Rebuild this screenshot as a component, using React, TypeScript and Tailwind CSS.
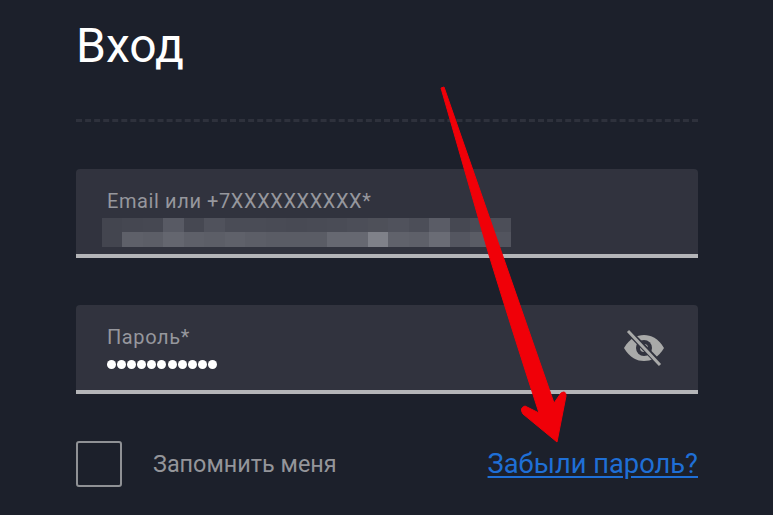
const mosaicTop = ["#43454f", "#454751", "#464852", "#585a64", "#464852", "#50525c", "#4a4c56", "#4a4c56", "#494b55", "#484a54", "#494b55", "#4a4c56", "#4c4e58", "#4e5059", "#50525c", "#4c4e58", "#5a5c66", "#464852", "#4a4c56", "#4c4e58"];
const mosaicBottom = ["#43454f", "#5e6069", "#5c5e67", "#64666f", "#5e6069", "#5c5e67", "#5f616a", "#5c5e67", "#5a5c65", "#5a5c65", "#5a5c65", "#666871", "#666871", "#7f8189", "#60626b", "#5e6069", "#6a6c75", "#545660", "#5a5c65", "#52545e"];

function Mosaic() {
  return (
    <div className="mt-[6px] ml-[-5px] grid w-[409px] grid-cols-[repeat(20,minmax(0,1fr))]">
      {mosaicTop.map((color, i) => (
        <div key={"t" + i} className="h-[14px]" style={{ backgroundColor: color }} />
      ))}
      {mosaicBottom.map((color, i) => (
        <div key={"b" + i} className="h-[15px]" style={{ backgroundColor: color }} />
      ))}
    </div>
  );
}

function Field({ label, children }: { label: string; children: React.ReactNode }) {
  return (
    <div className="relative h-[89px] rounded-t-[4px] border-b-[4px] border-[#b4b5b8] bg-[#31333e] pl-[31px] pt-[21px]">
      <p className="text-[20px] leading-[22px] tracking-[0.6px] text-[#96979d]">{label}</p>
      {children}
    </div>
  );
}

function Arrow() {
  return (
    <svg className="absolute left-0 top-0" width="773" height="515" viewBox="0 0 773 515">
      <path
        d="M441 88 L444 87 L554 403 L561 393 Q566 390 566 396 L557 442 L523 414 Q519 408 525 406 L539 413 Q512 330 489 255 Z"
        fill="#f00008"
        stroke="#f00008"
        strokeWidth="1"
        strokeLinejoin="round"
      />
    </svg>
  );
}

export default function App() {
  return (
    <div className="relative h-[515px] w-[773px] overflow-hidden bg-[#1c202b] font-['Roboto',sans-serif]">
      <div className="w-[622px] translate-x-[76px]">
        <h1 className="pt-[18px] text-[48px] leading-[56px] text-white">Вход</h1>
        <div className="mt-[45px] h-[3px] border-t-[3px] border-dashed border-[#2e313c]" />
        <div className="mt-[47px]">
          <Field label="Email или +7XXXXXXXXXX*">
            <Mosaic />
          </Field>
        </div>
        <div className="mt-[47px]">
          <Field label="Пароль*">
            <p className="mt-[12px] flex gap-[1.1px]">
              {Array.from({ length: 11 }).map((_, i) => (
                <span key={i} className="h-[9px] w-[9px] rounded-full bg-white" />
              ))}
            </p>
            <svg className="absolute right-[32px] top-[23px]" width="44" height="40" viewBox="0 0 44 40" fill="none">
              <path
                d="M2 20 C8 10 15 7 22 7 C29 7 36 10 42 20 C36 30 29 33 22 33 C15 33 8 30 2 20 Z"
                fill="#a9aaa9"
              />
              <circle cx="22" cy="20" r="8" fill="#31333e" />
              <circle cx="22" cy="20" r="4" fill="#a9aaa9" />
              <path d="M6 3 L38 36" stroke="#31333e" strokeWidth="6" />
              <path d="M6 3 L38 37" stroke="#a9aaa9" strokeWidth="3" />
            </svg>
          </Field>
        </div>
        <div className="mt-[47px] flex items-center justify-between">
          <label className="flex items-center gap-[31px]">
            <span className="h-[46px] w-[46px] rounded-[3px] border-2 border-[#8f9195]" />
            <span className="text-[23.4px] leading-[24px] text-[#94959a]">Запомнить меня</span>
          </label>
          <a className="text-[27.3px] leading-[28px] text-[#1f6fd6] underline underline-offset-[3px]">Забыли пароль?</a>
        </div>
      </div>
      <Arrow />
    </div>
  );
}
